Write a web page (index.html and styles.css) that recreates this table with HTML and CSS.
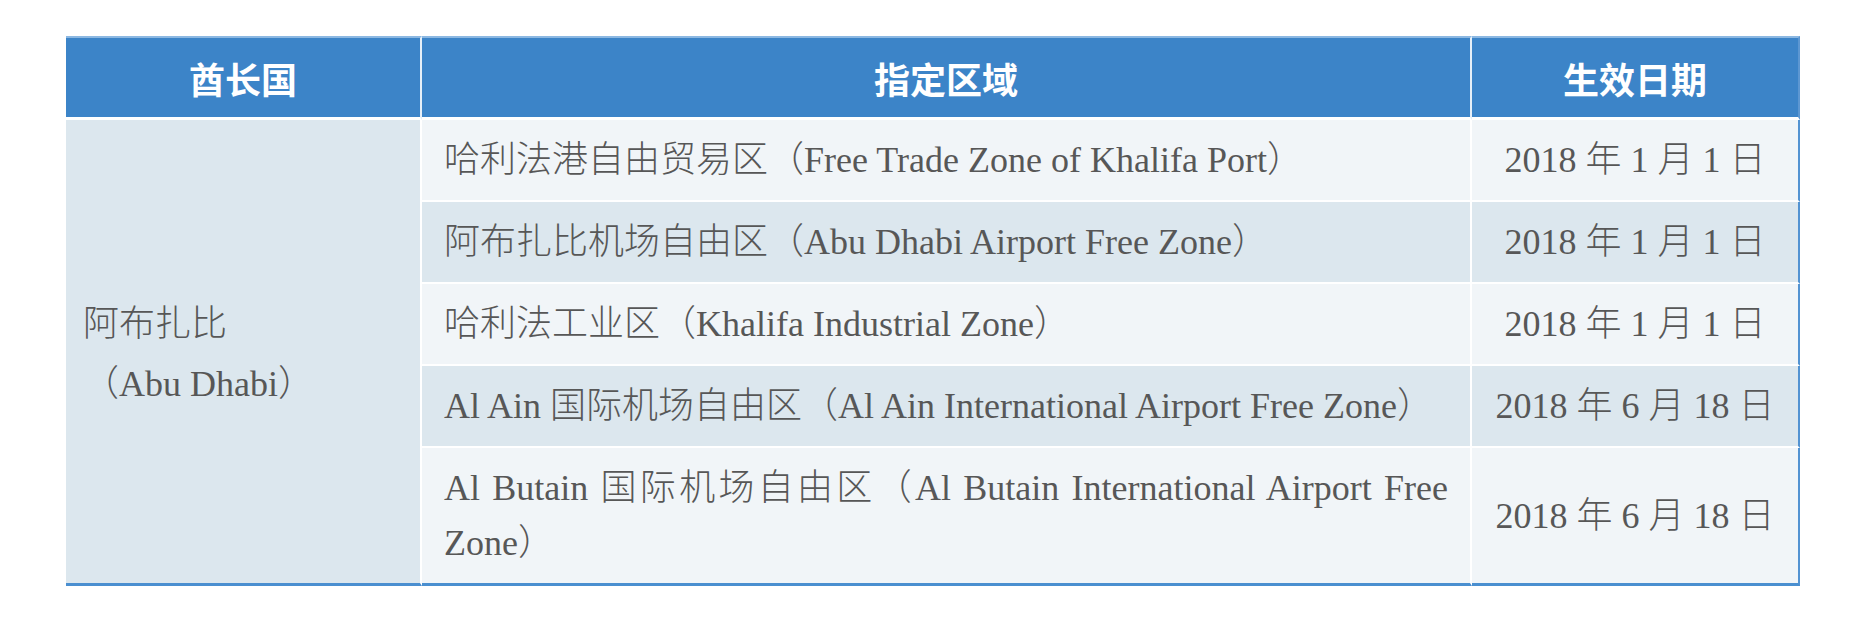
FILE: index.html
```html
<!DOCTYPE html>
<html lang="zh-CN">
<head>
<meta charset="utf-8">
<title>酋长国自由区</title>
<link rel="stylesheet" href="styles.css">
</head>
<body>
<div class="page">
  <table class="zones">
    <colgroup>
      <col class="c-emirate">
      <col class="c-zone">
      <col class="c-date">
    </colgroup>
    <thead>
      <tr>
        <th>酋长国</th>
        <th>指定区域</th>
        <th>生效日期</th>
      </tr>
    </thead>
    <tbody>
      <tr class="odd">
        <td class="emirate" rowspan="5">阿布扎比<br><span class="pn">（</span>Abu Dhabi<span class="pn">）</span></td>
        <td class="zone">哈利法港自由贸易区<span class="pn">（</span>Free Trade Zone of Khalifa Port<span class="pn">）</span></td>
        <td class="date">2018 年 1 月 1 日</td>
      </tr>
      <tr class="even">
        <td class="zone">阿布扎比机场自由区<span class="pn">（</span>Abu Dhabi Airport Free Zone<span class="pn">）</span></td>
        <td class="date">2018 年 1 月 1 日</td>
      </tr>
      <tr class="odd">
        <td class="zone">哈利法工业区<span class="pn">（</span>Khalifa Industrial Zone<span class="pn">）</span></td>
        <td class="date">2018 年 1 月 1 日</td>
      </tr>
      <tr class="even">
        <td class="zone">Al Ain 国际机场自由区<span class="pn">（</span>Al Ain International Airport Free Zone<span class="pn">）</span></td>
        <td class="date">2018 年 6 月 18 日</td>
      </tr>
      <tr class="odd last">
        <td class="zone">Al Butain 国际机场自由区<span class="pn">（</span>Al Butain International Airport Free <span class="wrap">Zone</span><span class="pn">）</span></td>
        <td class="date">2018 年 6 月 18 日</td>
      </tr>
    </tbody>
  </table>
</div>
</body>
</html>
```
FILE: styles.css
```css
html, body {
  margin: 0;
  padding: 0;
  background: #ffffff;
}

.page {
  padding: 36px 66px 0 66px;
}

.zones {
  width: 1734px;
  border-collapse: separate;
  border-spacing: 0;
  table-layout: fixed;
  font-family: "Liberation Serif", "Noto Sans CJK SC", serif;
  font-size: 36px;
  font-weight: 300;
  color: #575757;
}

.c-emirate { width: 356px; }
.c-zone { width: 1050px; }
.c-date { width: 328px; }

.pn {
  font-family: "Noto Sans CJK TC", "Noto Sans CJK SC", sans-serif;
  line-height: 1;
}

.wrap {
  white-space: nowrap;
}

.zones th {
  background: #3c84c8;
  color: #ffffff;
  font-family: "Noto Sans CJK SC", "Noto Sans", sans-serif;
  font-weight: 700;
  font-size: 36px;
  line-height: 50px;
  padding: 15px 0 14px 0;
  text-align: center;
  border-top: 2px solid #8cb8e2;
  border-right: 2px solid #e6eff8;
  border-bottom: 3px solid #ffffff;
}

.zones th:last-child {
  border-right: 2px solid #5d97d2;
}

.zones td {
  line-height: 55px;
  padding: 13px 22px 12px 22px;
  vertical-align: middle;
  border-right: 2px solid #ffffff;
  border-bottom: 2px solid #ffffff;
}

.zones td.date {
  text-align: center;
  padding: 13px 10px 12px 10px;
  border-right: 2px solid #5393d2;
}

.zones td.emirate {
  background: #dce7ee;
  line-height: 60px;
  padding: 13px 17px 8px 17px;
  border-bottom: 3px solid #4a8fd0;
}

.zones td.zone {
  text-align: justify;
}

.zones tr.odd td.zone,
.zones tr.odd td.date {
  background: #f1f5f8;
}

.zones tr.even td.zone,
.zones tr.even td.date {
  background: #dce7ee;
}

.zones tr.last td {
  border-bottom: 3px solid #4a8fd0;
}
```
